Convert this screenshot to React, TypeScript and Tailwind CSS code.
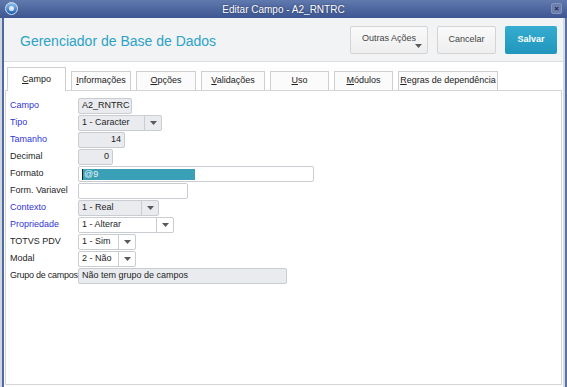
import React from "react";

const F = { fontFamily: '"Liberation Sans", Arial, sans-serif' };

function Arrow() {
  return (
    <svg width="7" height="4" viewBox="0 0 7 4">
      <path d="M0 0 L7 0 L3.5 4 Z" fill="#5a5a5a" />
    </svg>
  );
}

function Tab({ u, rest, w, active }: { u: string; rest: string; w: number; active?: boolean }) {
  return (
    <div
      className={
        "flex items-center justify-center border border-[#cfcfcf] border-b-0 text-[9px] text-[#222] whitespace-nowrap " +
        (active ? "h-[24px] bg-white -mb-px relative z-10" : "h-[19px] bg-[#fbfbfb]")
      }
      style={{ width: w }}
    >
      <span>
        <span className="underline">{u}</span>
        {rest}
      </span>
    </div>
  );
}

function Label({ text, blue, tight }: { text: string; blue?: boolean; tight?: boolean }) {
  return (
    <div
      className={
        "w-[68px] shrink-0 text-[9px] whitespace-nowrap relative z-10 " +
        (tight ? "tracking-[-0.25px] " : "") +
        (blue ? "text-[#3434d8]" : "text-[#1e1e1e]")
      }
    >
      {text}
    </div>
  );
}

function Box({ w, gray, children, right }: { w: number; gray?: boolean; children?: React.ReactNode; right?: boolean }) {
  return (
    <div
      className={
        "h-[16px] rounded-[2px] border border-[#c9ccd0] text-[9px] text-[#1e1e1e] flex items-center px-[3px] whitespace-nowrap " +
        (gray ? "bg-[#e9ebef] " : "bg-white ") +
        (right ? "justify-end" : "")
      }
      style={{ width: w }}
    >
      {children}
    </div>
  );
}

function Select({ w, gray, value }: { w: number; gray?: boolean; value: string }) {
  return (
    <div
      className={
        "h-[16px] rounded-[2px] border border-[#c9ccd0] text-[9px] text-[#1e1e1e] flex items-center " +
        (gray ? "bg-[#e9ebef]" : "bg-white")
      }
      style={{ width: w }}
    >
      <div className="flex-1 px-[3px] whitespace-nowrap">{value}</div>
      <div className="w-[17px] h-full border-l border-[#c9ccd0] flex items-center justify-center">
        <Arrow />
      </div>
    </div>
  );
}

function Row({ label, blue, tight, children }: { label: string; blue?: boolean; tight?: boolean; children: React.ReactNode }) {
  return (
    <div className="flex items-center h-[16px]">
      <Label text={label} blue={blue} tight={tight} />
      {children}
    </div>
  );
}

export default function App() {
  return (
    <div className="w-[567px] h-[387px] overflow-hidden flex flex-col bg-white" style={F}>
      {/* Title bar */}
      <div className="h-[18px] shrink-0 flex items-center relative bg-gradient-to-b from-[#6079ad] to-[#3d5692]">
        <div className="absolute left-[5px] top-[2px] w-[13px] h-[13px] rounded-full bg-gradient-to-b from-[#8fc2ef] to-[#1f5fae] border border-[#cfe2f5] flex items-center justify-center">
          <div className="w-[5px] h-[5px] rounded-full bg-white/80" />
        </div>
        <div className="flex-1 text-center text-[10px] text-white" style={{ textShadow: "0 0 2px #1c2c55" }}>
          Editar Campo - A2_RNTRC
        </div>
        <div className="absolute right-[5px] top-[3px] w-[11px] h-[11px] rounded-[2px] bg-[#6d80ad] border border-[#8393bb] flex items-center justify-center text-[8px] leading-none text-[#1b2240] font-bold">
          ×
        </div>
      </div>

      <div className="flex flex-1 min-h-0">
        {/* left strip */}
        <div className="w-[4px] shrink-0 flex">
          <div className="w-[2px] bg-[#d2d6de]" />
          <div className="w-[2px] bg-[#4c6aa3]" />
        </div>

        <div className="flex-1 flex flex-col min-w-0">
          {/* Header */}
          <div className="h-[44px] shrink-0 bg-[#f2f3f4] border-b border-[#dcdcdc] flex items-center pl-[16px] pr-[6px]">
            <div className="flex-1 text-[14px] text-[#2ca2c8] pt-[3px]">Gerenciador de Base de Dados</div>
            <div className="flex gap-[9px] items-center">
              <div className="w-[78px] h-[28px] rounded-[2px] border border-[#d4d4d4] bg-gradient-to-b from-[#fafafa] to-[#eeeeee] relative text-[9px] text-[#444] flex justify-center pt-[5px]">
                Outras Ações
                <div className="absolute right-[5px] bottom-[5px] flex">
                  <Arrow />
                </div>
              </div>
              <div className="w-[59px] h-[28px] rounded-[2px] border border-[#d4d4d4] bg-gradient-to-b from-[#fafafa] to-[#eeeeee] text-[9px] text-[#444] flex items-center justify-center">
                Cancelar
              </div>
              <div className="w-[52px] h-[28px] rounded-[2px] bg-gradient-to-b from-[#35acd0] to-[#2096bd] text-[9px] font-bold text-white flex items-center justify-center">
                Salvar
              </div>
            </div>
          </div>

          {/* Tabs */}
          <div className="h-[28px] shrink-0 bg-white flex items-end pl-[3px] gap-[5px]">
            <Tab u="C" rest="ampo" w={59} active />
            <Tab u="I" rest="nformações" w={60} />
            <Tab u="O" rest="pções" w={60} />
            <Tab u="V" rest="alidações" w={64} />
            <Tab u="U" rest="so" w={59} />
            <Tab u="M" rest="ódulos" w={59} />
            <Tab u="R" rest="egras de dependência" w={100} />
          </div>

          {/* Panel */}
          <div className="flex-1 ml-[1px] mr-[1px] mb-[2px] border border-[#d4d4d4] bg-white pl-[4px] pt-[7px] flex flex-col gap-[1px]">
            <Row label="Campo" blue>
              <Box w={54} gray>A2_RNTRC</Box>
            </Row>
            <Row label="Tipo" blue>
              <Select w={84} gray value="1 - Caracter" />
            </Row>
            <Row label="Tamanho" blue>
              <Box w={47} gray right>14</Box>
            </Row>
            <Row label="Decimal">
              <Box w={35} gray right>0</Box>
            </Row>
            <Row label="Formato">
              <Box w={236}>
                <div className="h-[11px] w-[113px] bg-[#3aa0b6] text-[9px] leading-[11px] text-[#e8f4f8] border-l border-[#222] pl-[1px]">
                  @9
                </div>
              </Box>
            </Row>
            <Row label="Form. Variavel">
              <Box w={110} />
            </Row>
            <Row label="Contexto" blue>
              <Select w={81} gray value="1 - Real" />
            </Row>
            <Row label="Propriedade" blue>
              <Select w={96} value="1 - Alterar" />
            </Row>
            <Row label="TOTVS PDV">
              <Select w={58} value="1 - Sim" />
            </Row>
            <Row label="Modal">
              <Select w={58} value="2 - Não" />
            </Row>
            <Row label="Grupo de campos" tight>
              <Box w={209} gray>Não tem grupo de campos</Box>
            </Row>
          </div>
        </div>

        {/* right strip */}
        <div className="w-[4px] shrink-0 flex">
          <div className="w-[2px] bg-[#d6d9de]" />
          <div className="w-[2px] bg-[#5a72a6]" />
        </div>
      </div>
    </div>
  );
}
